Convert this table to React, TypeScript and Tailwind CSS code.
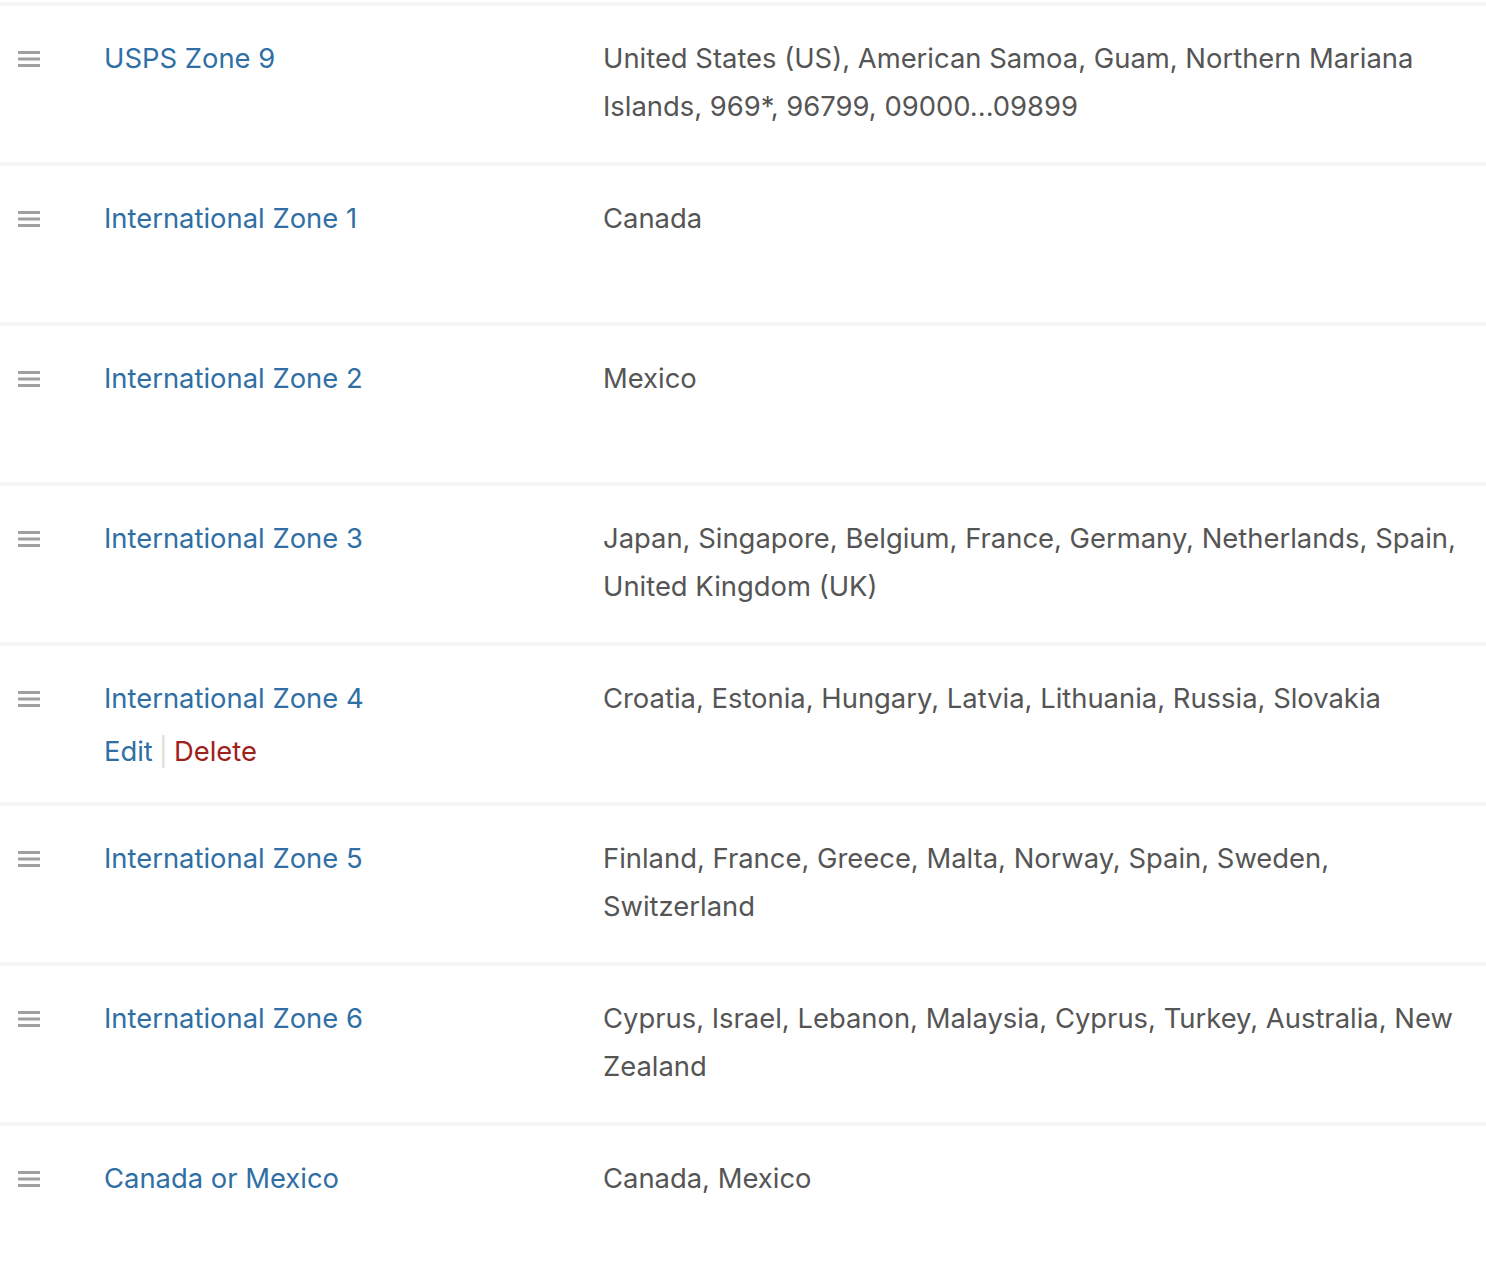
import React from "react";

type Zone = { name: string; regions: string; actions?: boolean };

const zones: Zone[] = [
  { name: "USPS Zone 9", regions: "United States (US), American Samoa, Guam, Northern Mariana Islands, 969*, 96799, 09000...09899" },
  { name: "International Zone 1", regions: "Canada" },
  { name: "International Zone 2", regions: "Mexico" },
  { name: "International Zone 3", regions: "Japan, Singapore, Belgium, France, Germany, Netherlands, Spain, United Kingdom (UK)" },
  { name: "International Zone 4", regions: "Croatia, Estonia, Hungary, Latvia, Lithuania, Russia, Slovakia", actions: true },
  { name: "International Zone 5", regions: "Finland, France, Greece, Malta, Norway, Spain, Sweden, Switzerland" },
  { name: "International Zone 6", regions: "Cyprus, Israel, Lebanon, Malaysia, Cyprus, Turkey, Australia, New Zealand" },
  { name: "Canada or Mexico", regions: "Canada, Mexico" },
];

function Handle() {
  return (
    <svg width="22" height="16" viewBox="0 0 22 16" className="block">
      <rect x="0" y="0" width="22" height="3" fill="#a0a0a0" />
      <rect x="0" y="6.5" width="22" height="3" fill="#a0a0a0" />
      <rect x="0" y="13" width="22" height="3" fill="#a0a0a0" />
    </svg>
  );
}

export default function App() {
  return (
    <div
      className="w-[1486px] min-h-[1264px] bg-white pt-[2px] text-[27.4px] leading-[48px] text-[#555555]"
      style={{ fontFamily: "Inter, 'Open Sans', sans-serif" }}
    >
      {zones.map((z, i) => (
        <div key={i} className="flex h-[160px] border-t-4 border-[#f5f5f5]">
          <div className="w-[104px] shrink-0 pl-[18px] pt-[45px]">
            <Handle />
          </div>
          <div className="w-[499px] shrink-0 pt-[28px]">
            <div className="text-[#2f6fa4]">{z.name}</div>
            <div className={`mt-[5px] flex items-center ${z.actions ? "visible" : "invisible"}`}>
              <span className="text-[#2f6fa4]">Edit</span>
              <span className="mx-[6px] text-[#dddddd]">|</span>
              <span className="text-[#a0201b]">Delete</span>
            </div>
          </div>
          <div className="w-[862px] shrink-0 pt-[28px]">{z.regions}</div>
        </div>
      ))}
    </div>
  );
}
